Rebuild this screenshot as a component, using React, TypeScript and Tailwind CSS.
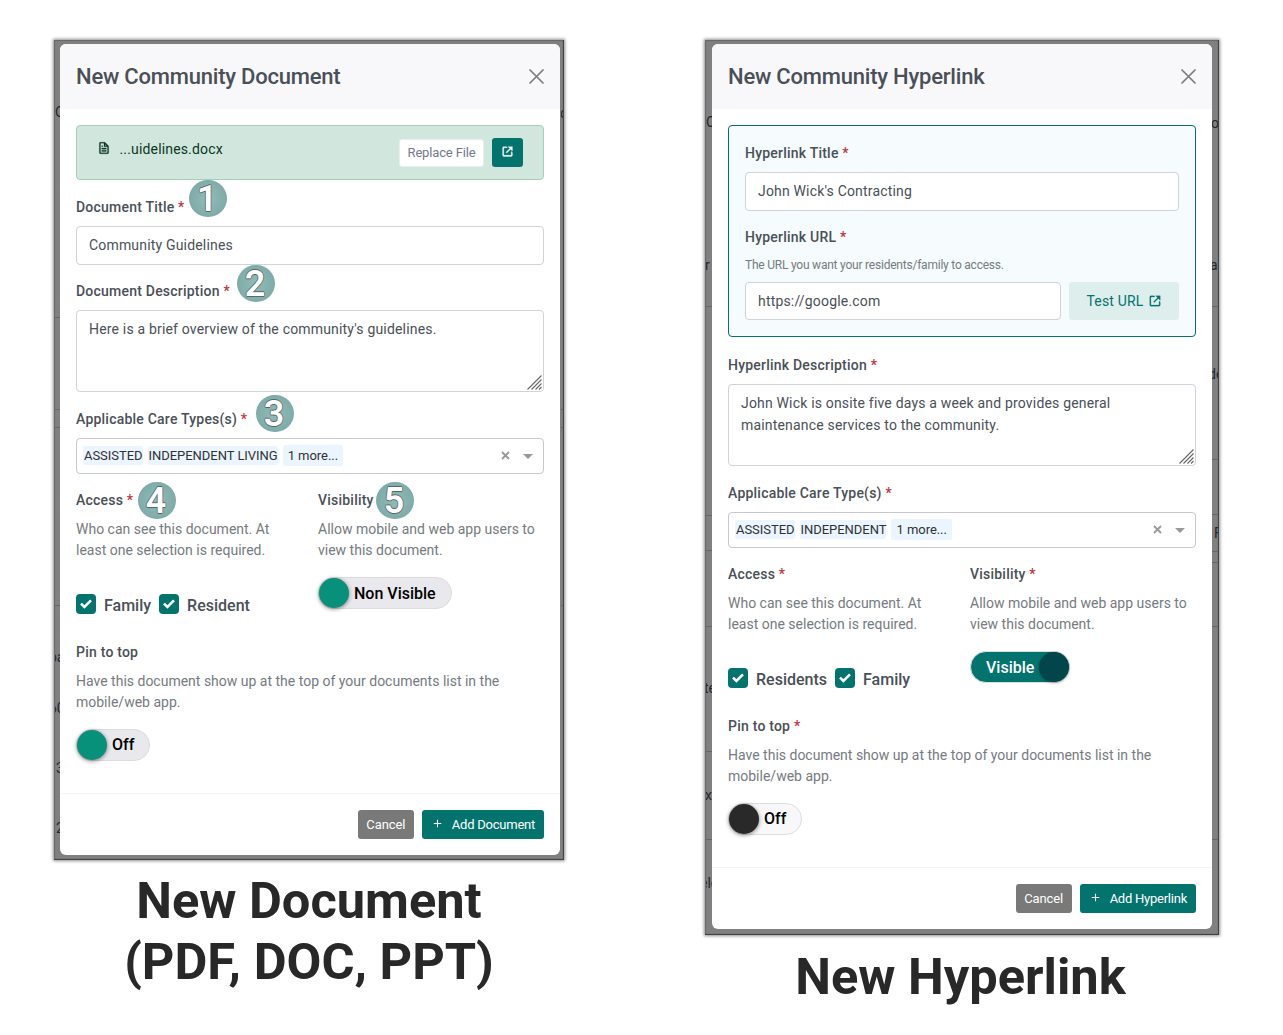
import type { ReactNode } from 'react';
import { BiFile, BiLinkExternal, BiPlus } from 'react-icons/bi';

function Star() {
  return <span className="text-[#c5303a]"> *</span>;
}

function Label(props: any) {
  const { required, className = '', children, badge } = props;
  return (
    <div className={`relative h-[21px] text-sm leading-[21px] font-medium tracking-[0.22px] text-[#495057] whitespace-nowrap ${className}`}>
      {children}
      {required && <Star />}
      {badge}
    </div>
  );
}

function Badge({ n, className }: { n: number; className: string }) {
  return (
    <span className={`absolute flex h-[37px] w-[38px] items-center justify-center rounded-full bg-radial from-[#8fbcb8] to-[#78a5a3] pr-[2px] text-[36px] leading-none font-semibold tracking-normal text-white [text-shadow:0.8px_0_0_#5a6666,-0.8px_0_0_#5a6666,0_0.8px_0_#5a6666,0_-0.8px_0_#5a6666] ${className}`}>
      {n}
    </span>
  );
}

function TextArea({ children }: { children: ReactNode }) {
  return (
    <div className="relative mt-2 h-[82px] rounded border border-[#ced4da] bg-white px-3 py-[7px] text-sm leading-[22px] tracking-[0.18px] text-[#495057]">
      {children}
      <svg className="absolute right-[1px] bottom-[1px]" width="15" height="15" viewBox="0 0 15 15" stroke="#666" strokeWidth="1.1">
        <path d="M0.5 14.5 L14.5 0.5 M4.5 14.5 L14.5 4.5 M8.5 14.5 L14.5 8.5 M12 14.5 L14.5 12" />
      </svg>
    </div>
  );
}

function CareSelect({ tags }: { tags: string[] }) {
  return (
    <div className="mt-2 flex h-9 items-center rounded border border-[#c5c9cd] bg-white pr-[10px] pb-[2px] pl-[6px] text-[13px] tracking-[-0.04px] text-[#2f3133]">
      {tags.map((t) => (
        <span key={t} className="mr-[5px] h-[19px] rounded-xs bg-[#ebf5ff] pl-px leading-[19px] whitespace-nowrap">{t}</span>
      ))}
      <span className="h-[21px] rounded-xs bg-[#ebf5ff] px-[5px] leading-[21px]">1 more...</span>
      <svg className="ml-auto" width="9" height="9" viewBox="0 0 9 9" stroke="#999" strokeWidth="1.8">
        <path d="M1 1 L8 8 M8 1 L1 8" />
      </svg>
      <svg className="mt-[3px] ml-[13px]" width="10" height="5" viewBox="0 0 10 5" fill="#999">
        <path d="M0 0 H10 L5 5 Z" />
      </svg>
    </div>
  );
}

function Check({ children }: { children: ReactNode }) {
  return (
    <div className="mr-2 flex items-start">
      <span className="flex h-5 w-5 items-center justify-center rounded bg-[#02736d]">
        <svg width="12" height="10" viewBox="0 0 12 10" fill="none" stroke="#fff" strokeWidth="2.6">
          <path d="M1 4.6 L4.4 8 L11 1.4" />
        </svg>
      </span>
      <span className="mt-[2px] ml-2 text-base leading-5 font-medium text-[#495057]">{children}</span>
    </div>
  );
}

function Toggle(props: any) {
  const { on, children, className } = props;
  if (on) {
    return (
      <div className={`flex h-8 items-center justify-between rounded-full border border-[#d5e2e1] bg-[#02736d] pl-[15px] text-base font-medium text-white ${className}`}>
        <span className="mt-px">{children}</span>
        <span className="h-[30px] w-[30px] rounded-full bg-[#02464b] shadow-[0_1px_3px_rgba(0,0,0,0.35)]" />
      </div>
    );
  }
  return (
    <div className={`flex h-8 items-center rounded-full border text-base font-medium text-black ${className}`}>
      <span className={`mr-[5px] h-[30px] w-[30px] rounded-full shadow-[0_1px_4px_rgba(0,0,0,0.5)] ${props.knob}`} />
      {children}
    </div>
  );
}

function Help({ children }: { children: ReactNode }) {
  return <p className="mt-2 text-sm leading-[21px] text-[#757b80]">{children}</p>;
}

function Dialog(props: any) {
  const { title, action, children } = props;
  return (
    <div className="relative flex w-[500px] flex-col rounded-md bg-white">
      <div className="flex h-[65px] items-center justify-between rounded-t-md bg-[#f8f8fb] pr-4 pb-px pl-4">
        <h2 className="text-[22px] font-medium tracking-[-0.21px] text-[#495057]">{title}</h2>
        <svg width="15" height="15" viewBox="0 0 15 15" stroke="#7c7c7e" strokeWidth="1.7" strokeLinecap="round">
          <path d="M1 1 L14 14 M14 1 L1 14" />
        </svg>
      </div>
      <div className="px-4 pt-4 pb-8">{children}</div>
      <div className="flex h-[62px] justify-end gap-2 rounded-b-md border-t border-[#f5f5f7] px-4 pt-4 text-[13px] tracking-[-0.24px] text-white">
        <button className="h-[29px] w-[56px] rounded-[3px] bg-[#797979] tracking-[-0.1px]">Cancel</button>
        <button className="flex h-[29px] items-center rounded-[3px] bg-[#02736d] px-[9px]">
          <BiPlus className="mt-[-2px] mr-[8px] text-[13px]" />
          {action}
        </button>
      </div>
    </div>
  );
}

// Slivers of the page underneath that show at the sides of the dialog
function Sliver({ items }: { items: any[] }) {
  return (
    <>
      {items.map(([side, top, text, left], i) => (
        <span
          key={i}
          className={`absolute overflow-hidden text-sm leading-4 text-[#25252c] ${side === 'l' ? 'left-px w-[7px]' : 'right-px left-[507px]'} ${text ? 'h-4' : 'h-px bg-[#666]'}`}
          style={{ top }}
        >
          <span className="absolute" style={{ left }}>{text}</span>
        </span>
      ))}
    </>
  );
}

const leftPage = [
  ['l', 64, 'O', 0], ['l', 277, ''], ['l', 369, ''], ['l', 387, ''], ['l', 565, ''], ['l', 609, 'pa', -6], ['l', 660, '60', -6], ['l', 720, '3', 1], ['l', 780, '2', 1],
  ['r', 65, 'o', -1], ['r', 369, ''], ['r', 387, ''], ['r', 565, ''],
];
const rightPage = [
  ['l', 74, 'O', 0], ['l', 217, 'r', -1], ['l', 266, ''], ['l', 475, ''], ['l', 510, ''], ['l', 586, ''], ['l', 640, 'te', -2], ['l', 711, ''], ['l', 747, 'x', -1], ['l', 799, ''], ['l', 835, 'ele', -6],
  ['r', 75, 'o', -1], ['r', 217, 'a', -2], ['r', 266, ''], ['r', 326, 'de', -4], ['r', 419, ''], ['r', 474, ''], ['r', 485, 'F', 2], ['r', 511, ''], ['r', 522, ''], ['r', 586, ''], ['r', 799, ''],
];

const input = 'flex items-center rounded border border-[#ced4da] bg-white px-3 pb-px text-sm tracking-[0.18px] text-[#495057]';
const frame = 'relative bg-[#808080] pt-1 shadow-[0_0_3px_1px_rgba(0,0,0,0.45),inset_-1px_-1px_1px_#3c3c3c,inset_1px_1px_1px_#666]';

export default function App() {
  return (
    <div className="flex h-[1035px] w-[1283px] items-start overflow-hidden bg-white pt-10 pl-[54px] font-['Roboto',sans-serif]">
      <section className="w-[510px]">
        <div className={`${frame} h-[820px] pl-[6px]`}>
          <Sliver items={leftPage} />
          <Dialog title="New Community Document" action="Add Document">
            <div className="flex h-[55px] rounded border border-[#a3cfbb] bg-[#d1e7dd] pr-5 pl-[20px] text-sm text-[#0a3622]">
              <BiFile className="mt-[15px] text-[14px]" strokeWidth="0.4" />
              <span className="mt-[13px] ml-[8.5px] leading-[21px] tracking-[0.16px]">...uidelines.docx</span>
              <button className="mt-[13px] mr-2 ml-auto h-[28px] w-[85px] rounded-[3px] border border-[#e9eeed] bg-white text-[13px] tracking-[-0.15px] text-[#74788d]">Replace File</button>
              <button className="mt-3 flex h-[29px] w-[31px] items-center justify-center rounded-[3px] bg-[#02736d] pb-[3px] text-[13px] text-white"><BiLinkExternal strokeWidth="0.6" /></button>
            </div>
            <Label className="mt-[17px]" required badge={<Badge n={1} className="top-[-17px] left-[113px]" />}>Document Title</Label>
            <div className={`${input} mt-2 h-[39px]`}>Community Guidelines</div>
            <Label className="mt-4" required badge={<Badge n={2} className="top-[-16px] left-[161px]" />}>Document Description</Label>
            <TextArea>Here is a brief overview of the community's guidelines.</TextArea>
            <Label className="mt-[17px]" required badge={<Badge n={3} className="top-[-14px] left-[180px]" />}>Applicable Care Types(s)</Label>
            <CareSelect tags={['ASSISTED', 'INDEPENDENT LIVING']} />
            <div className="mt-4 grid h-[152px] grid-cols-[242px_1fr]">
              <div>
                <Label required badge={<Badge n={4} className="top-[-8px] left-[62px]" />}>Access</Label>
                <Help>Who can see this document. At<br />least one selection is required.</Help>
                <div className="mt-[33px] flex"><Check>Family</Check><Check>Resident</Check></div>
              </div>
              <div>
                <Label badge={<Badge n={5} className="top-[-8px] left-[58px]" />}>Visibility</Label>
                <Help>Allow mobile and web app users to<br />view this document.</Help>
                <Toggle className="mt-4 w-[134px] border-[#dcdce0] bg-[#e9e8ec]" knob="bg-[#08917a]"><span className="mt-px">Non Visible</span></Toggle>
              </div>
            </div>
            <Label>Pin to top</Label>
            <Help>Have this document show up at the top of your documents list in the<br />mobile/web app.</Help>
            <Toggle className="mt-4 w-[74px] border-[#dcdce0] bg-[#e9e8ec]" knob="bg-[#08917a]">Off</Toggle>
          </Dialog>
        </div>
        <h1 className="mt-[10px] text-center text-[50.6px] leading-[61px] font-bold text-[#282828]">New Document<br />(PDF, DOC, PPT)</h1>
      </section>

      <section className="ml-[141px] w-[514px]">
        <div className={`${frame} h-[895px] pl-[7px]`}>
          <Sliver items={rightPage} />
          <Dialog title="New Community Hyperlink" action="Add Hyperlink">
            <div className="h-[212px] rounded border border-[#02736d] bg-[#f6fbfd] px-4 pt-[17px]">
              <Label required>Hyperlink Title</Label>
              <div className={`${input} mt-2 h-[39px]`}>John Wick's Contracting</div>
              <Label className="mt-4" required>Hyperlink URL</Label>
              <p className="mt-2 h-[18px] text-[12px] leading-[18px] tracking-[-0.22px] text-[#757b80]">The URL you want your residents/family to access.</p>
              <div className="mt-2 flex h-[38px] gap-2">
                <div className={`${input} flex-1`}>https://google.com</div>
                <button className="flex w-[110px] items-center justify-center gap-1 rounded-[3px] bg-[#deeeed] text-sm tracking-[0.18px] text-[#02736d]">Test URL <BiLinkExternal strokeWidth="0.4" /></button>
              </div>
            </div>
            <Label className="mt-[18px]" required>Hyperlink Description</Label>
            <TextArea>John Wick is onsite five days a week and provides general maintenance services to the community.</TextArea>
            <Label className="mt-[17px]" required>Applicable Care Type(s)</Label>
            <CareSelect tags={['ASSISTED', 'INDEPENDENT']} />
            <div className="mt-4 grid h-[152px] grid-cols-[242px_1fr]">
              <div>
                <Label required>Access</Label>
                <Help>Who can see this document. At<br />least one selection is required.</Help>
                <div className="mt-[33px] flex"><Check>Residents</Check><Check>Family</Check></div>
              </div>
              <div>
                <Label required>Visibility</Label>
                <Help>Allow mobile and web app users to<br />view this document.</Help>
                <Toggle on className="mt-4 w-[100px]">Visible</Toggle>
              </div>
            </div>
            <Label required>Pin to top</Label>
            <Help>Have this document show up at the top of your documents list in the<br />mobile/web app.</Help>
            <Toggle className="mt-4 w-[74px] border-[#dedee2] bg-[#f8f8fb]" knob="bg-[#292929]">Off</Toggle>
          </Dialog>
        </div>
        <h1 className="mt-[11px] mr-[3px] text-center text-[50.6px] leading-[61px] font-bold text-[#282828]">New Hyperlink</h1>
      </section>
    </div>
  );
}
